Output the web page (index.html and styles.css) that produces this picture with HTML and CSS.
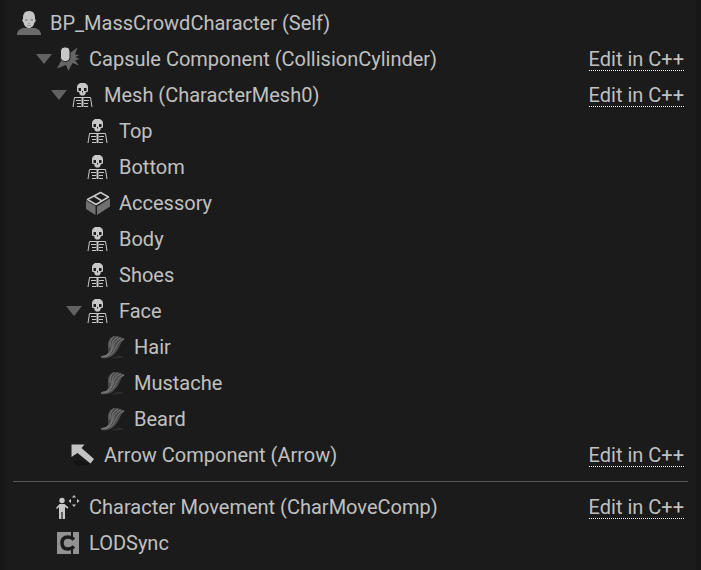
FILE: index.html
```html
<!DOCTYPE html>
<html lang="en">
<head>
<meta charset="utf-8">
<title>Components</title>
<link rel="stylesheet" href="styles.css">
</head>
<body>
<svg class="symbols" aria-hidden="true">
  <symbol id="person" viewBox="0 0 24 24">
    <path fill="#6b6b6b" d="M0 24c0-4 2-5.500 6-7h12c4 1.500 6 3 6 7z"/>
    <path fill="#c4c4c4" d="M12 0c4 0 6 2.800 6 6.500V8c1 0 1 2.500-.5 3.500-.6 3-2.500 5.500-5.500 5.500s-4.900-2.500-5.500-5.500C5 10.500 5 8 6 8V6.500C6 2.800 8 0 12 0z"/>
    <path stroke="#666" fill="none" d="M8 9h2.500M13.500 9H16"/>
    <path stroke="#999" fill="none" d="M11 12.500h2M10 14.500h4"/>
  </symbol>
  <symbol id="capsule" viewBox="0 0 24 24">
    <path fill="#656565" d="M14 6l7.500-5.500-2.500 7 4.500.5-4 2 4 2-4.500 1.500 4 5-6.500-2.500-2 3.500L12.500 24 10 18l-9 3.500 4-7.500z"/>
    <rect x="4.500" y="0" width="9.500" height="14.500" rx="4" fill="#c8c8c8" stroke="#1b1b1b"/>
  </symbol>
  <symbol id="skeleton" viewBox="0 0 24 24">
    <path fill="#c8c8c8" fill-rule="evenodd" d="M9 0h5l2.500 2L17 4v4.500l-2.500 1V11L13 12.500h-3L8.500 11V9.500L6 8.500V4l.5-2zM7.500 5v3H10V5zM13 5v3h2.500V5zM11 8v1.500h1V8z"/>
    <path fill="none" stroke="#c8c8c8" d="M2 24l1.500-9.500h16L21 24M5 17.500h5M13 17.500h5M6 20.500h4M13 20.500h4M6 23.500h4M13 23.500h4"/>
    <path fill="#c8c8c8" d="M10.500 14h2v10h-2z"/>
  </symbol>
  <symbol id="brick" viewBox="0 0 24 24">
    <path fill="#707070" d="M0 9.500l9.500 5.500v9L0 18zM11 15.500L24 7.500v8L11 24z"/>
    <path fill="none" stroke="#c8c8c8" stroke-width="1.500" stroke-linejoin="round" d="M1.500 8.500L14.500 1.500 22.500 6 10 13.500zM8 5l8 5"/>
  </symbol>
  <symbol id="groom" viewBox="0 0 24 24">
    <path fill="#2c2c2c" d="M10 23l7-2.500 6 1-3 1.500-7 .5z"/>
    <path fill="#4a4a4a" d="M8 5c3-5 8-5 16-1-5 3-5 8-8 12-4 6-9 8-16 7v-2c5 0 8-3 7-7 0-3-1-6 1-9z"/>
    <path fill="none" stroke="#888" stroke-width=".8" d="M23 4c-6 2-7 6-9 10-3 6-7 8-14 8M20 3c-6 2-7 6-8 10-2 5-5 8-10 8M17 2c-5 2-6 6-6 10-1 4-2 7-5 8M13 1.500C9 4 9 8 9 12"/>
  </symbol>
  <symbol id="arrow" viewBox="0 0 24 24">
    <path fill="#131313" d="M2 18l6-1 10 4-4 1.500-8-.5z"/>
    <path fill="#c4c4c4" d="M.5 1.500h13L10.500 5 23 16l-3.500 4.500L6.500 10l-6 4z"/>
  </symbol>
  <symbol id="movement" viewBox="0 0 24 24">
    <circle cx="6" cy="5.500" r="2.700" fill="#c8c8c8"/>
    <path fill="#c8c8c8" d="M3.500 9h5l4 3.500-1 1.200L9 12v12H6.600v-7H5.400v7H3V12l-2 2-1-1z"/>
    <path fill="#c8c8c8" d="M18 0l2 2.500h-4zM18 12l2-2.500h-4zM12.500 6L15 4v4zM23.500 6L21 4v4z"/>
  </symbol>
  <symbol id="component" viewBox="0 0 24 24">
    <path fill="#929292" d="M1 1h22v22H1z"/>
    <path fill="none" stroke="#1b1b1b" stroke-width="3.500" d="M18 8.500C16 6.500 14 6 12 6c-4 0-6 2.500-6 6s2 6 6 6c2 0 4-.5 6-2.500"/>
    <path fill="#1b1b1b" d="M15 1h2v7h-2zM15 16h2v7h-2z"/>
  </symbol>
</svg>

<main class="panel">
  <div class="row root"><svg class="icon"><use href="#person"/></svg><span class="name">BP_MassCrowdCharacter (Self)</span></div>
  <ul class="tree top-level">
    <li>
      <div class="row"><button class="toggle" aria-label="Collapse Capsule Component"></button><svg class="icon"><use href="#capsule"/></svg><span class="name">Capsule Component (CollisionCylinder)</span><a class="edit" href="#">Edit in C++</a></div>
      <ul class="tree">
        <li>
          <div class="row"><button class="toggle" aria-label="Collapse Mesh"></button><svg class="icon"><use href="#skeleton"/></svg><span class="name">Mesh (CharacterMesh0)</span><a class="edit" href="#">Edit in C++</a></div>
          <ul class="tree">
            <li class="row leaf"><svg class="icon"><use href="#skeleton"/></svg><span class="name">Top</span></li>
            <li class="row leaf"><svg class="icon"><use href="#skeleton"/></svg><span class="name">Bottom</span></li>
            <li class="row leaf"><svg class="icon"><use href="#brick"/></svg><span class="name">Accessory</span></li>
            <li class="row leaf"><svg class="icon"><use href="#skeleton"/></svg><span class="name">Body</span></li>
            <li class="row leaf"><svg class="icon"><use href="#skeleton"/></svg><span class="name">Shoes</span></li>
            <li>
              <div class="row"><button class="toggle" aria-label="Collapse Face"></button><svg class="icon"><use href="#skeleton"/></svg><span class="name">Face</span></div>
              <ul class="tree">
                <li class="row leaf"><svg class="icon"><use href="#groom"/></svg><span class="name">Hair</span></li>
                <li class="row leaf"><svg class="icon"><use href="#groom"/></svg><span class="name">Mustache</span></li>
                <li class="row leaf"><svg class="icon"><use href="#groom"/></svg><span class="name">Beard</span></li>
              </ul>
            </li>
          </ul>
        </li>
        <li class="row leaf"><svg class="icon"><use href="#arrow"/></svg><span class="name">Arrow Component (Arrow)</span><a class="edit" href="#">Edit in C++</a></li>
      </ul>
    </li>
  </ul>
  <hr class="divider">
  <ul class="tree top-level">
    <li class="row leaf"><svg class="icon"><use href="#movement"/></svg><span class="name">Character Movement (CharMoveComp)</span><a class="edit" href="#">Edit in C++</a></li>
    <li class="row leaf"><svg class="icon"><use href="#component"/></svg><span class="name">LODSync</span></li>
  </ul>
</main>
</body>
</html>
```
FILE: styles.css
```css
* { box-sizing: border-box; }

body {
  margin: 0;
  background: #171717;
  color: #c0c0c0;
  font: 20px/24px Roboto, "Liberation Sans", sans-serif;
}

.symbols { display: none; }

.panel {
  min-height: 100vh;
  margin: 0 5px;
  padding: 5px 0 8px;
  background: #1b1b1b;
}

.tree {
  margin: 0;
  padding: 0 0 0 15px;
  list-style: none;
}

.tree.top-level { padding-left: 31px; }

.row {
  display: flex;
  align-items: center;
  height: 36px;
  padding-right: 12px;
}

.root { padding-left: 12px; }
.leaf { padding-left: 20px; }

.toggle {
  flex: none;
  width: 16px;
  height: 10px;
  margin-right: 4px;
  padding: 0;
  border: 0;
  background: #626262;
  clip-path: polygon(0 0, 100% 0, 50% 100%);
}

.icon {
  flex: none;
  width: 24px;
  height: 24px;
  margin-right: 9px;
}

.name {
  flex: 1;
  white-space: nowrap;
}

.edit {
  height: 24px;
  border-bottom: 1px dotted #fff;
  color: inherit;
  text-decoration: none;
  white-space: nowrap;
}

.divider {
  height: 1px;
  margin: 8px 8px 7px;
  border: 0;
  background: #575757;
}
```
